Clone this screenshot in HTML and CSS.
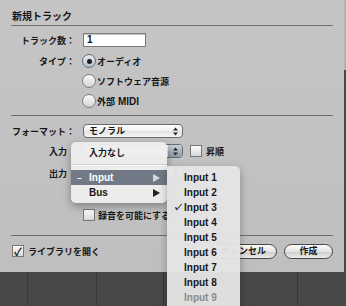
FILE: index.html
```html
<!DOCTYPE html>
<html lang="ja">
<head>
    <meta charset="UTF-8">
    <title>新規トラック</title>
    <link rel="stylesheet" href="styles.css">
</head>
<body>
    <div class="dialog">
        <div class="heading">新規トラック</div>

        <div class="sec sec-track">
            <div class="row">
                <span class="label">トラック数：</span>
                <span class="field"><span class="en">1</span></span>
            </div>
            <div class="row radio-row first">
                <span class="label">タイプ：</span>
                <span class="radio on"></span><span>オーディオ</span>
            </div>
            <div class="row radio-row">
                <span class="label"></span>
                <span class="radio"></span><span>ソフトウェア音源</span>
            </div>
            <div class="row radio-row">
                <span class="label"></span>
                <span class="radio"></span><span>外部<span class="en midi">MIDI</span></span>
            </div>
        </div>

        <div class="sec sec-io">
            <div class="row">
                <span class="label">フォーマット：</span>
                <span class="popup">
                    <span class="popup-text">モノラル</span>
                    <span class="popup-arrows"><svg width="5" height="9" viewBox="0 0 5 9"><polygon points="0,3.5 2.5,0.5 5,3.5" /><polygon points="0,5.5 2.5,8.5 5,5.5" /></svg></span>
                </span>
            </div>
            <div class="row gap6">
                <span class="label pad">入力</span>
                <span class="popup">
                    <span class="popup-text"></span>
                    <span class="popup-arrows pressed"><svg width="5" height="9" viewBox="0 0 5 9"><polygon points="0,3.5 2.5,0.5 5,3.5" /><polygon points="0,5.5 2.5,8.5 5,5.5" /></svg></span>
                </span>
                <span class="check ml7"></span><span>昇順</span>
            </div>
            <div class="row gap8">
                <span class="label pad">出力</span>
                <span class="popup">
                    <span class="popup-text"></span>
                    <span class="popup-arrows"><svg width="5" height="9" viewBox="0 0 5 9"><polygon points="0,3.5 2.5,0.5 5,3.5" /><polygon points="0,5.5 2.5,8.5 5,5.5" /></svg></span>
                </span>
            </div>
            <div class="row gap28">
                <span class="label"></span>
                <span class="check"></span><span>録音を可能にする</span>
            </div>
        </div>

        <div class="footer">
            <span class="check on">&#10003;</span><span>ライブラリを開く</span>
            <button class="btn cancel">キャンセル</button>
            <button class="btn create">作成</button>
        </div>
    </div>

    <div class="menu">
        <div class="item">入力なし</div>
        <div class="menu-sep"></div>
        <div class="item hl"><span class="mark">&ndash;</span><span class="en">Input</span><svg class="arrow" width="7" height="8" viewBox="0 0 7 8"><polygon points="0,0 7,4 0,8" /></svg></div>
        <div class="item"><span class="mark"></span><span class="en">Bus</span><svg class="arrow" width="7" height="8" viewBox="0 0 7 8"><polygon points="0,0 7,4 0,8" /></svg></div>
    </div>

    <div class="submenu">
        <div class="sub-item"><span class="mark"></span>Input 1</div>
        <div class="sub-item"><span class="mark"></span>Input 2</div>
        <div class="sub-item"><span class="mark">&#10003;</span>Input 3</div>
        <div class="sub-item"><span class="mark"></span>Input 4</div>
        <div class="sub-item"><span class="mark"></span>Input 5</div>
        <div class="sub-item"><span class="mark"></span>Input 6</div>
        <div class="sub-item"><span class="mark"></span>Input 7</div>
        <div class="sub-item"><span class="mark"></span>Input 8</div>
        <div class="sub-item off"><span class="mark"></span>Input 9</div>
    </div>
</body>
</html>
```

FILE: styles.css
```css
body {
    margin: 0;
    width: 346px;
    height: 306px;
    overflow: hidden;
    position: relative;
    font: bold 9px "Noto Sans CJK JP", sans-serif;
    color: #171717;
    background:
        linear-gradient(90deg, transparent 27px, #393939 27px 28px, transparent 28px 96px, #393939 96px 97px, transparent 97px 163px, #393939 163px 164px, transparent 164px 297px, #393939 297px 298px, transparent 298px),
        linear-gradient(180deg, #b2b2b2 0 70px, #484848 70px);
}
.en {
    font-family: "Liberation Sans", sans-serif;
    font-size: 10px;
}
.midi {
    margin-left: 3px;
}
.dialog {
    width: 344px;
    height: 272px;
    background: linear-gradient(180deg, #c5c5c5, #bfbfbf);
    display: flex;
    flex-direction: column;
}
.heading {
    height: 26px;
    box-sizing: border-box;
    margin: 0 11px;
    padding: 10px 0 0 1px;
    border-bottom: 1px solid #6e6e6e;
    font-size: 10px;
    line-height: 12px;
}
.sec {
    margin: 0 11px;
    box-sizing: border-box;
    border-bottom: 1px solid #6e6e6e;
}
.sec-track {
    height: 90px;
    padding-top: 7px;
}
.sec-io {
    height: 120px;
    padding-top: 8px;
}
.row {
    display: flex;
    align-items: center;
    height: 14px;
}
.radio-row {
    height: 20px;
}
.radio-row.first {
    margin-top: 4px;
}
.gap6 { margin-top: 6px; }
.gap8 { margin-top: 8px; }
.gap28 { margin-top: 28px; }
.label {
    width: 64px;
    margin-right: 8px;
    text-align: right;
    flex-shrink: 0;
}
.label.pad {
    box-sizing: border-box;
    padding-right: 8px;
}
.field {
    width: 63px;
    height: 14px;
    box-sizing: border-box;
    border: 1px solid #7c7c7c;
    background: #fff;
    box-shadow: inset 0 1px 1px rgba(0, 0, 0, 0.25);
    padding-left: 3px;
    line-height: 12px;
}
.radio {
    width: 14px;
    height: 14px;
    box-sizing: border-box;
    margin: 0 1px 0 -1px;
    border-radius: 50%;
    border: 1px solid #7d7d7d;
    background: linear-gradient(180deg, #fbfbfb, #d2d2d2);
    display: flex;
    align-items: center;
    justify-content: center;
}
.radio.on {
    background: linear-gradient(180deg, #e8edf3, #b5bdc8);
    border-color: #666c76;
}
.radio.on::after {
    content: "";
    width: 5px;
    height: 5px;
    border-radius: 50%;
    background: #1e1e1e;
}
.popup {
    width: 100px;
    height: 14px;
    box-sizing: border-box;
    border: 1px solid #6a6a6a;
    border-radius: 4px;
    background: linear-gradient(180deg, #ffffff, #efefef 50%, #e2e2e2 50%, #f6f6f6);
    display: flex;
    align-items: center;
    overflow: hidden;
}
.popup-text {
    flex: 1;
    padding-left: 5px;
    line-height: 12px;
}
.popup-arrows {
    width: 14px;
    height: 12px;
    display: flex;
    align-items: center;
    justify-content: center;
}
.popup-arrows svg {
    fill: #2a2a2a;
}
.popup-arrows.pressed {
    background: linear-gradient(180deg, #c9d0db, #8d97a6);
}
.check {
    width: 12px;
    height: 12px;
    box-sizing: border-box;
    border: 1px solid #777;
    background: linear-gradient(180deg, #fdfdfd, #d6d6d6);
    margin-right: 3px;
    display: flex;
    align-items: center;
    justify-content: center;
    font-size: 11px;
    line-height: 10px;
    color: #222;
    flex-shrink: 0;
}
.check.ml7 {
    margin-left: 7px;
    margin-right: 4px;
}
.footer {
    flex: 1;
    display: flex;
    align-items: center;
    padding: 0 11px 6px 12px;
}
.footer .check {
    margin-right: 4px;
}
.btn {
    height: 15px;
    box-sizing: border-box;
    border: 1px solid #474747;
    border-radius: 8px;
    background: linear-gradient(180deg, #fdfdfd, #e4e4e4 50%, #cbcbcb 50%, #ececec);
    font: bold 9px "Noto Sans CJK JP", sans-serif;
    color: #171717;
    padding: 0;
    line-height: 12px;
}
.cancel {
    width: 67px;
    margin-left: auto;
}
.create {
    width: 49px;
    margin-left: 7px;
}
.menu {
    position: absolute;
    left: 71px;
    top: 142px;
    width: 96px;
    height: 61px;
    box-sizing: border-box;
    padding-top: 3px;
    border-radius: 5px;
    background: rgba(237, 237, 237, 0.97);
    box-shadow: 0 3px 8px rgba(0, 0, 0, 0.35);
}
.menu .item {
    height: 15px;
    line-height: 15px;
    padding-left: 18px;
    display: flex;
    align-items: center;
}
.menu .item .mark {
    width: 12px;
    margin-left: -12px;
}
.menu .item.hl {
    background: #727986;
    color: #fff;
}
.menu .item .arrow {
    margin-left: auto;
    margin-right: 7px;
    fill: #222;
}
.menu .item.hl .arrow {
    fill: #d6d9de;
}
.menu-sep {
    height: 10px;
    background: linear-gradient(180deg, transparent 4px, #cfcfcf 4px 5px, #fafafa 5px 6px, transparent 6px);
}
.submenu {
    position: absolute;
    left: 167px;
    top: 166px;
    width: 73px;
    height: 150px;
    box-sizing: border-box;
    padding-top: 4px;
    border-radius: 0 5px 0 0;
    background: rgba(228, 228, 228, 0.96);
    box-shadow: 0 3px 8px rgba(0, 0, 0, 0.3);
    font-family: "Liberation Sans", sans-serif;
    font-size: 10px;
}
.sub-item {
    height: 15px;
    line-height: 15px;
    padding-left: 6px;
    display: flex;
}
.sub-item .mark {
    width: 11px;
}
.sub-item.off {
    color: #8a8a8a;
}
```
